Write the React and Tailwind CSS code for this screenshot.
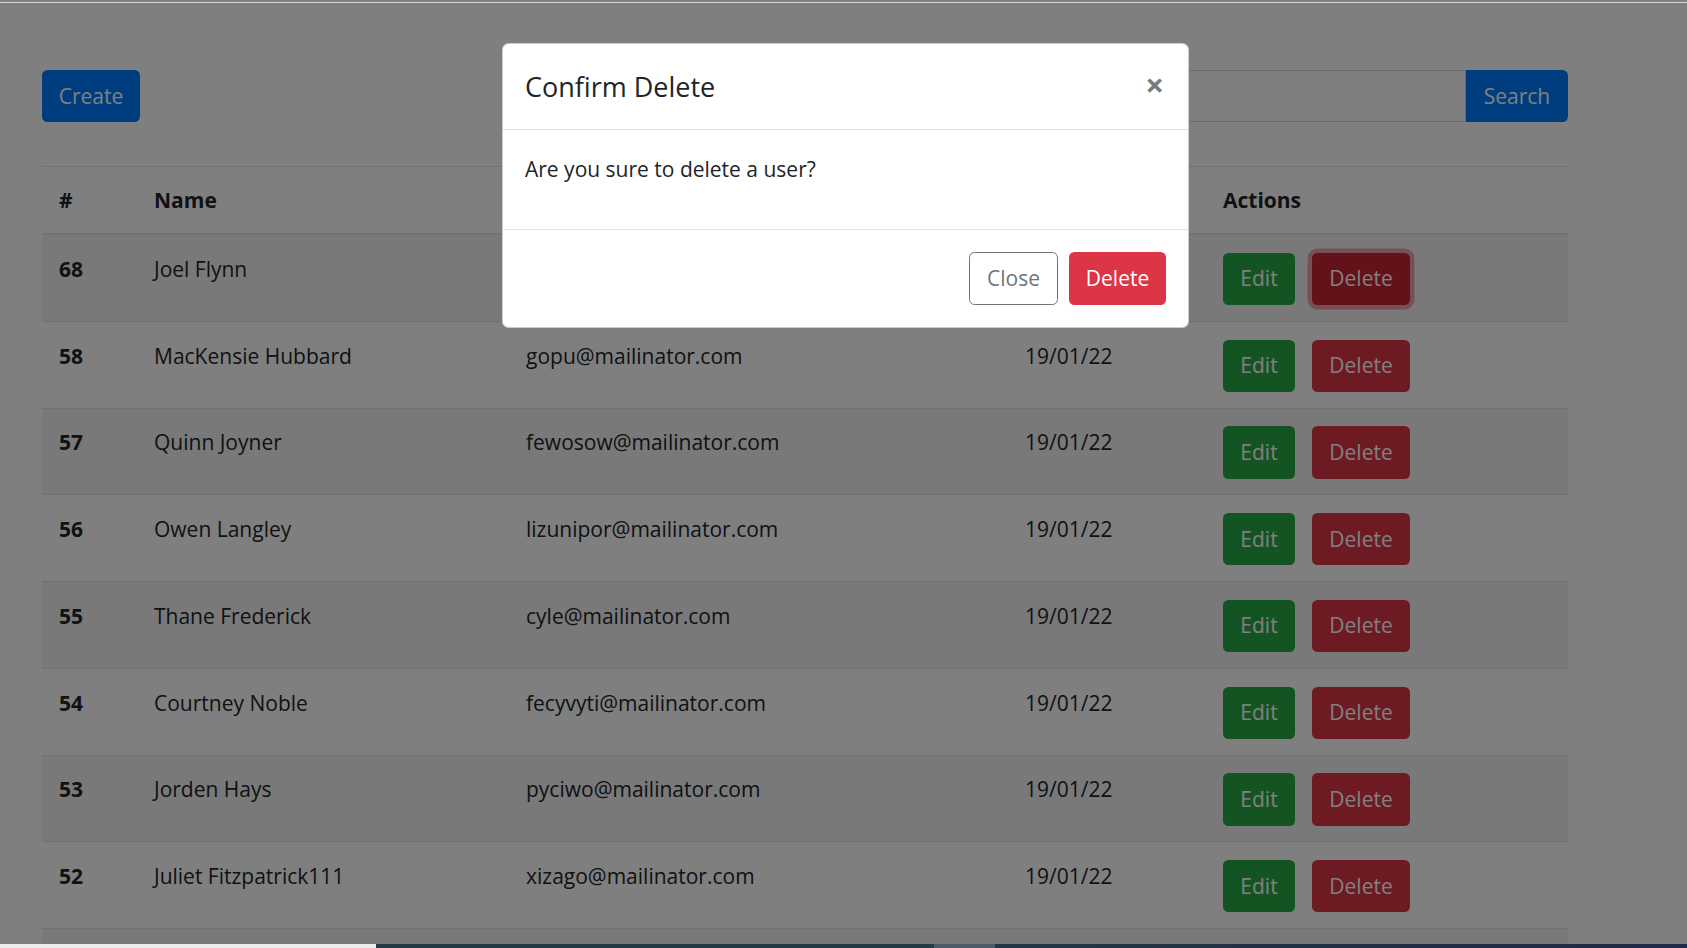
import { Fragment } from "react";

const users = [
  { id: 68, name: "Joel Flynn", email: "qyhuv@mailinator.com", date: "19/01/22" },
  { id: 58, name: "MacKensie Hubbard", email: "gopu@mailinator.com", date: "19/01/22" },
  { id: 57, name: "Quinn Joyner", email: "fewosow@mailinator.com", date: "19/01/22" },
  { id: 56, name: "Owen Langley", email: "lizunipor@mailinator.com", date: "19/01/22" },
  { id: 55, name: "Thane Frederick", email: "cyle@mailinator.com", date: "19/01/22" },
  { id: 54, name: "Courtney Noble", email: "fecyvyti@mailinator.com", date: "19/01/22" },
  { id: 53, name: "Jorden Hays", email: "pyciwo@mailinator.com", date: "19/01/22" },
  { id: 52, name: "Juliet Fitzpatrick111", email: "xizago@mailinator.com", date: "19/01/22" },
];

const cell = "border-t border-[#dee2e6] px-[17px] pt-[17.75px] pb-[15.75px] align-top";

function UserRow({ u, i }) {
  const focused = i === 0;
  return (
    <tr className={i % 2 === 0 ? "bg-[#f2f2f2]" : ""}>
      <td className={`${cell} font-bold`}>{u.id}</td>
      <td className={cell}>{u.name}</td>
      <td className={cell}>{u.email}</td>
      <td className={cell}>{u.date}</td>
      <td className={cell}>
        <div className="flex gap-[17px]">
          <button className="h-[52.25px] w-[72px] rounded-[5.5px] bg-[#28a745] text-white">Edit</button>
          <button
            className={`h-[52.25px] w-[98px] rounded-[5.5px] text-white ${
              focused ? "bg-[#c82333] shadow-[0_0_0_4.4px_rgba(225,83,97,0.5)]" : "bg-[#dc3545]"
            }`}
          >
            Delete
          </button>
        </div>
      </td>
    </tr>
  );
}

export default function App() {
  return (
    <div className="flex h-[948px] flex-col overflow-hidden font-['Open_Sans',sans-serif] text-[21px] leading-[33px] text-[#212529]">
      <div className="h-[2px] bg-[#808080]" />
      <div className="h-px bg-[#d6d6d6]" />

      <div className="relative flex-1 overflow-hidden bg-white">
        <div className="ml-[42px] w-[1526px] pt-[67px]">
          <div className="flex items-start justify-between">
            <button className="h-[52px] w-[98px] rounded-[5.5px] bg-[#007bff] text-white">Create</button>
            <div className="flex">
              <input
                className="h-[52px] w-[620px] rounded-l-[5.5px] border border-[#ced4da] px-[16px] outline-none"
                placeholder=""
              />
              <button className="h-[52px] w-[102px] rounded-r-[5.5px] bg-[#007bff] text-white">Search</button>
            </div>
          </div>

          <table className="mt-[44px] w-full table-fixed border-collapse">
            <colgroup>
              <col className="w-[95px]" />
              <col className="w-[372px]" />
              <col className="w-[499px]" />
              <col className="w-[198px]" />
              <col className="w-[362px]" />
            </colgroup>
            <thead>
              <tr>
                {["#", "Name", "Email", "Date", "Actions"].map((h) => (
                  <Fragment key={h}>
                    <th className="border-t border-b-2 border-[#dee2e6] px-[17px] pt-[17px] pb-[16px] text-left align-bottom font-bold">
                      {h}
                    </th>
                  </Fragment>
                ))}
              </tr>
            </thead>
            <tbody>
              {users.map((u, i) => (
                <UserRow key={u.id} u={u} i={i} />
              ))}
              <tr className="bg-[#f2f2f2]">
                <td colSpan={5} className="h-[86px] border-t border-[#dee2e6]"></td>
              </tr>
            </tbody>
          </table>
        </div>

        {/* backdrop */}
        <div className="absolute inset-0 bg-black/50" />

        {/* modal */}
        <div className="absolute left-[502px] top-[40px] w-[687px] rounded-[6.6px] border border-black/20 bg-white">
          <div className="flex items-start justify-between border-b border-[#dee2e6] p-[22px]">
            <h5 className="pt-px text-[27px] font-medium leading-[40.25px]">Confirm Delete</h5>
            <button className="-m-[22px] ml-auto pt-[24px] pr-[24px] pb-[20px] pl-[22px] text-[33px] font-bold leading-none text-[#7a7a7a]">
              ×
            </button>
          </div>
          <div className="p-[22px]">
            <p className="mb-[21px] pt-px">Are you sure to delete a user?</p>
          </div>
          <div className="flex items-center justify-end border-t border-[#dee2e6] p-[16.5px]">
            <button className="m-[5.5px] h-[52.25px] w-[89px] rounded-[5.5px] border border-[#6c757d] bg-white text-[#6c757d]">
              Close
            </button>
            <button className="m-[5.5px] h-[52.25px] w-[97px] rounded-[5.5px] bg-[#dc3545] text-white">Delete</button>
          </div>
        </div>
      </div>

      <div className="flex h-[4px]">
        <div className="w-[376px] bg-[#ececec]" />
        <div className="w-[558px] bg-[#243a45]" />
        <div className="w-[61px] bg-[#4b5c68]" />
        <div className="flex-1 bg-gradient-to-r from-[#243643] to-[#1e2a46]" />
      </div>
    </div>
  );
}
